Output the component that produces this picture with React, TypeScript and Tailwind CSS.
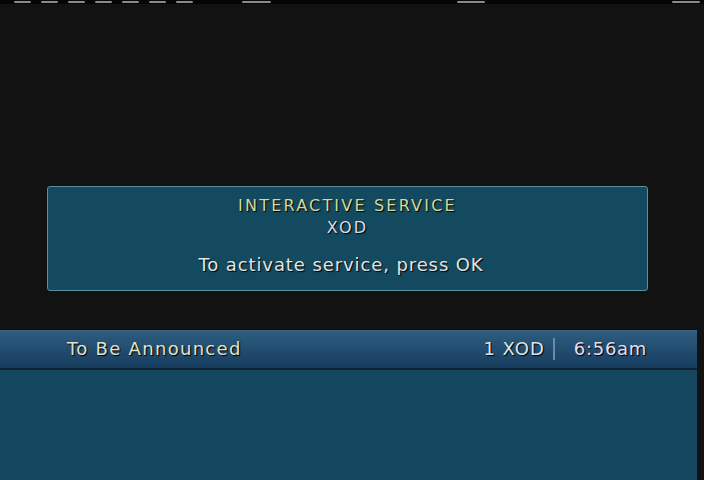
import React from "react";

const dashes = [
  [14, 17], [41, 17], [68, 17], [95, 17], [122, 17], [149, 17], [176, 17],
  [242, 29], [457, 28], [672, 28],
];

export default function App() {
  return (
    <div
      className="w-[704px] h-[480px] bg-[#121212] flex flex-col overflow-hidden"
      style={{ fontFamily: '"DejaVu Sans", Verdana, sans-serif' }}
    >
      {/* top strip */}
      <div className="relative h-[4px] bg-[#050505]">
        {dashes.map(([x, w], i) => (
          <div
            key={i}
            className="absolute top-[1px] h-[2px] rounded-full bg-[#8a8a8a]"
            style={{ left: x, width: w }}
          />
        ))}
      </div>

      {/* popup */}
      <div className="pt-[182px] pl-[47px]">
        <div className="w-[601px] h-[105px] rounded-[3px] border border-[#5a8ea0] bg-[#134a5f] flex flex-col items-center pt-[8px] [text-shadow:1px_1px_1px_#000]">
          <div className="text-[16px] leading-[22px] tracking-[2.2px] text-[#d6d89a]">INTERACTIVE SERVICE</div>
          <div className="text-[16px] leading-[22px] tracking-[2.2px] text-[#dcdce8]">XOD</div>
          <div className="mt-[15px] mr-[13px] text-[18px] leading-[22px] tracking-[0.9px] text-[#e4e4e4]">
            To activate service, press OK
          </div>
        </div>
      </div>

      {/* info bar */}
      <div className="mt-[39px] w-[697px] h-[40px] pb-[3px] border-t-2 border-[#3d5e78] border-b-2 border-b-[#0e2436] bg-gradient-to-b from-[#2c5c80] to-[#173d5e] flex items-center [text-shadow:1px_1px_1px_#000]">
        <div className="pl-[67px] text-[18px] tracking-[1.3px] text-[#e2e2c8]">To Be Announced</div>
        <div className="ml-auto flex items-center">
          <span className="text-[18px] tracking-[1px] text-[#dde4ea]">1 XOD</span>
          <span className="ml-[8px] w-[2px] h-[22px] bg-[#6c8aa0]" />
          <span className="pl-[19px] pr-[50px] text-[18px] tracking-[0.7px] text-[#e6dcef]">6:56am</span>
        </div>
      </div>

      {/* lower panel */}
      <div className="w-[697px] flex-1 bg-[#154860]" />
    </div>
  );
}
